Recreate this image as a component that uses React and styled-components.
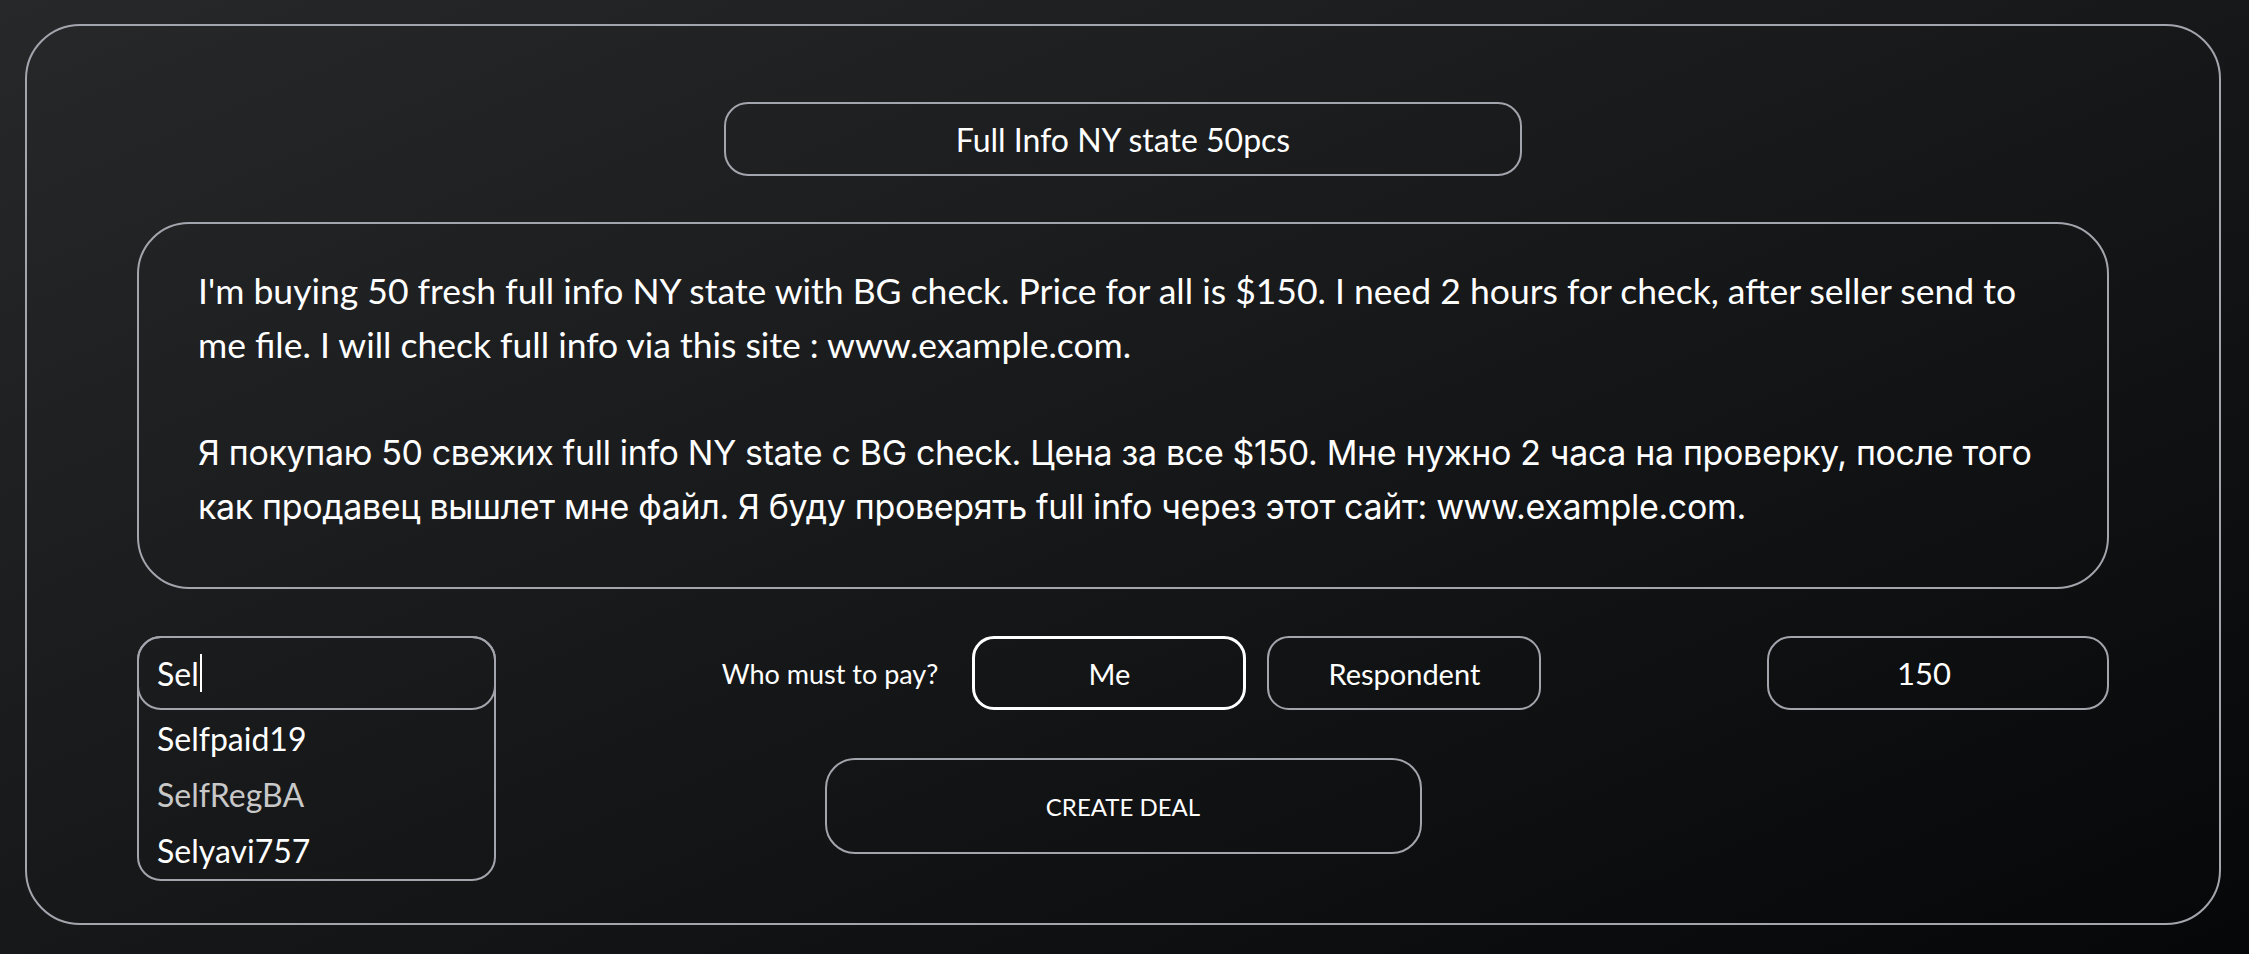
import React, {Component} from 'react';
import styled, {createGlobalStyle} from 'styled-components';

const GlobalStyle = createGlobalStyle`
    html, body {
        margin: 0;
        padding: 0;
    }

    body {
        background: linear-gradient(to bottom right, #27282a, #060708);
        font-family: "Lato", "Liberation Sans", sans-serif;
        color: white;
        min-height: 100vh;
    }
`;

const Page = styled.div`
    box-sizing: border-box;
    height: 954px;
    padding: 24px 28px 29px 25px;
`;

const Card = styled.div`
    box-sizing: border-box;
    height: 100%;
    border: 2px solid #a3a5ad;
    border-radius: 55px;
    padding: 76px 110px 0;
    display: flex;
    flex-direction: column;
    align-items: center;
`;

const Title = styled.div`
    box-sizing: border-box;
    width: 798px;
    height: 74px;
    border: 2px solid #a3a5ad;
    border-radius: 24px;
    display: flex;
    align-items: center;
    justify-content: center;
    font-size: 32px;
`;

const Description = styled.div`
    box-sizing: border-box;
    width: 100%;
    height: 367px;
    margin-top: 46px;
    border: 2px solid #a3a5ad;
    border-radius: 52px;
    padding: 40px 60px 0 59px;
    font-size: 35.5px;
    line-height: 54px;
`;

const Paragraph = styled.p`
    margin: 0 0 ${p => p.last ? '0' : '54px'};
    font-family: ${p => p.alt ? '"Inter", "Liberation Sans", sans-serif' : 'inherit'};
    font-size: ${p => p.alt ? '34px' : 'inherit'};
    letter-spacing: ${p => p.alt ? '-0.35px' : 'normal'};
`;

const Row = styled.div`
    width: 100%;
    margin-top: 47px;
    display: flex;
    justify-content: space-between;
    align-items: flex-start;
`;

const Combo = styled.div`
    position: relative;
    width: 359px;
    height: 74px;
`;

const SearchBox = styled.div`
    position: relative;
    z-index: 2;
    box-sizing: border-box;
    height: 74px;
    border: 2px solid #a3a5ad;
    border-radius: 24px;
    padding: 0 18px;
    display: flex;
    align-items: center;
    font-size: 32px;
`;

const Caret = styled.span`
    display: inline-block;
    width: 2px;
    height: 38px;
    margin-left: 1px;
    background: white;
`;

const Menu = styled.div`
    position: absolute;
    z-index: 1;
    top: 0;
    left: 0;
    right: 0;
    box-sizing: border-box;
    border: 2px solid #a3a5ad;
    border-radius: 24px;
    padding: 73px 0 0;
`;

const MenuItem = styled.div`
    height: 56px;
    line-height: 56px;
    padding: 0 18px;
    font-size: 32px;
    color: ${p => p.muted ? '#c8c8c8' : 'white'};
`;

const PayGroup = styled.div`
    display: flex;
    align-items: center;
`;

const Label = styled.span`
    font-size: 27px;
    margin-right: 34px;
`;

const Choice = styled.button`
    box-sizing: border-box;
    width: 274px;
    height: 74px;
    margin-right: ${p => p.first ? '21px' : '0'};
    background: transparent;
    border: ${p => p.active ? '3px solid #ffffff' : '2px solid #a3a5ad'};
    border-radius: 22px;
    color: white;
    font-family: inherit;
    font-size: 29px;
    cursor: pointer;
`;

const Amount = styled.div`
    box-sizing: border-box;
    width: 342px;
    height: 74px;
    border: 2px solid #a3a5ad;
    border-radius: 24px;
    display: flex;
    align-items: center;
    justify-content: center;
    padding-right: 28px;
    font-size: 31px;
`;

const CreateButton = styled.button`
    box-sizing: border-box;
    width: 597px;
    height: 96px;
    margin-top: 48px;
    background: transparent;
    border: 2px solid #a3a5ad;
    border-radius: 30px;
    color: white;
    font-family: inherit;
    font-size: 24px;
    cursor: pointer;
`;

const english = "I'm buying 50 fresh full info NY state with BG check. Price for all is $150. I need 2 hours for check, after seller send to me file. I will check full info via this site : www.example.com.";
const russian = "Я покупаю 50 свежих full info NY state с BG check. Цена за все $150. Мне нужно 2 часа на проверку, после того как продавец вышлет мне файл. Я буду проверять full info через этот сайт: www.example.com.";

const users = ['Selfpaid19', 'SelfRegBA', 'Selyavi757'];

class App extends Component {
    state = {
        payer: 'me'
    };

    render() {
        return (
            <Page>
                <GlobalStyle/>
                <Card>
                    <Title>Full Info NY state 50pcs</Title>
                    <Description>
                        <Paragraph>{english}</Paragraph>
                        <Paragraph alt last lang="ru">{russian}</Paragraph>
                    </Description>

                    <Row>
                        <Combo>
                            <SearchBox>Sel<Caret/></SearchBox>
                            <Menu>
                                {users.map(u => (
                                    <MenuItem key={u} muted={u === 'SelfRegBA'}>{u}</MenuItem>
                                ))}
                            </Menu>
                        </Combo>

                        <PayGroup>
                            <Label>Who must to pay?</Label>
                            <Choice first active={this.state.payer === 'me'}
                                    onClick={() => this.setState({payer: 'me'})}>Me</Choice>
                            <Choice active={this.state.payer === 'respondent'}
                                    onClick={() => this.setState({payer: 'respondent'})}>Respondent</Choice>
                        </PayGroup>

                        <Amount>150</Amount>
                    </Row>

                    <CreateButton>CREATE DEAL</CreateButton>
                </Card>
            </Page>
        )
    }
}

export default App;
